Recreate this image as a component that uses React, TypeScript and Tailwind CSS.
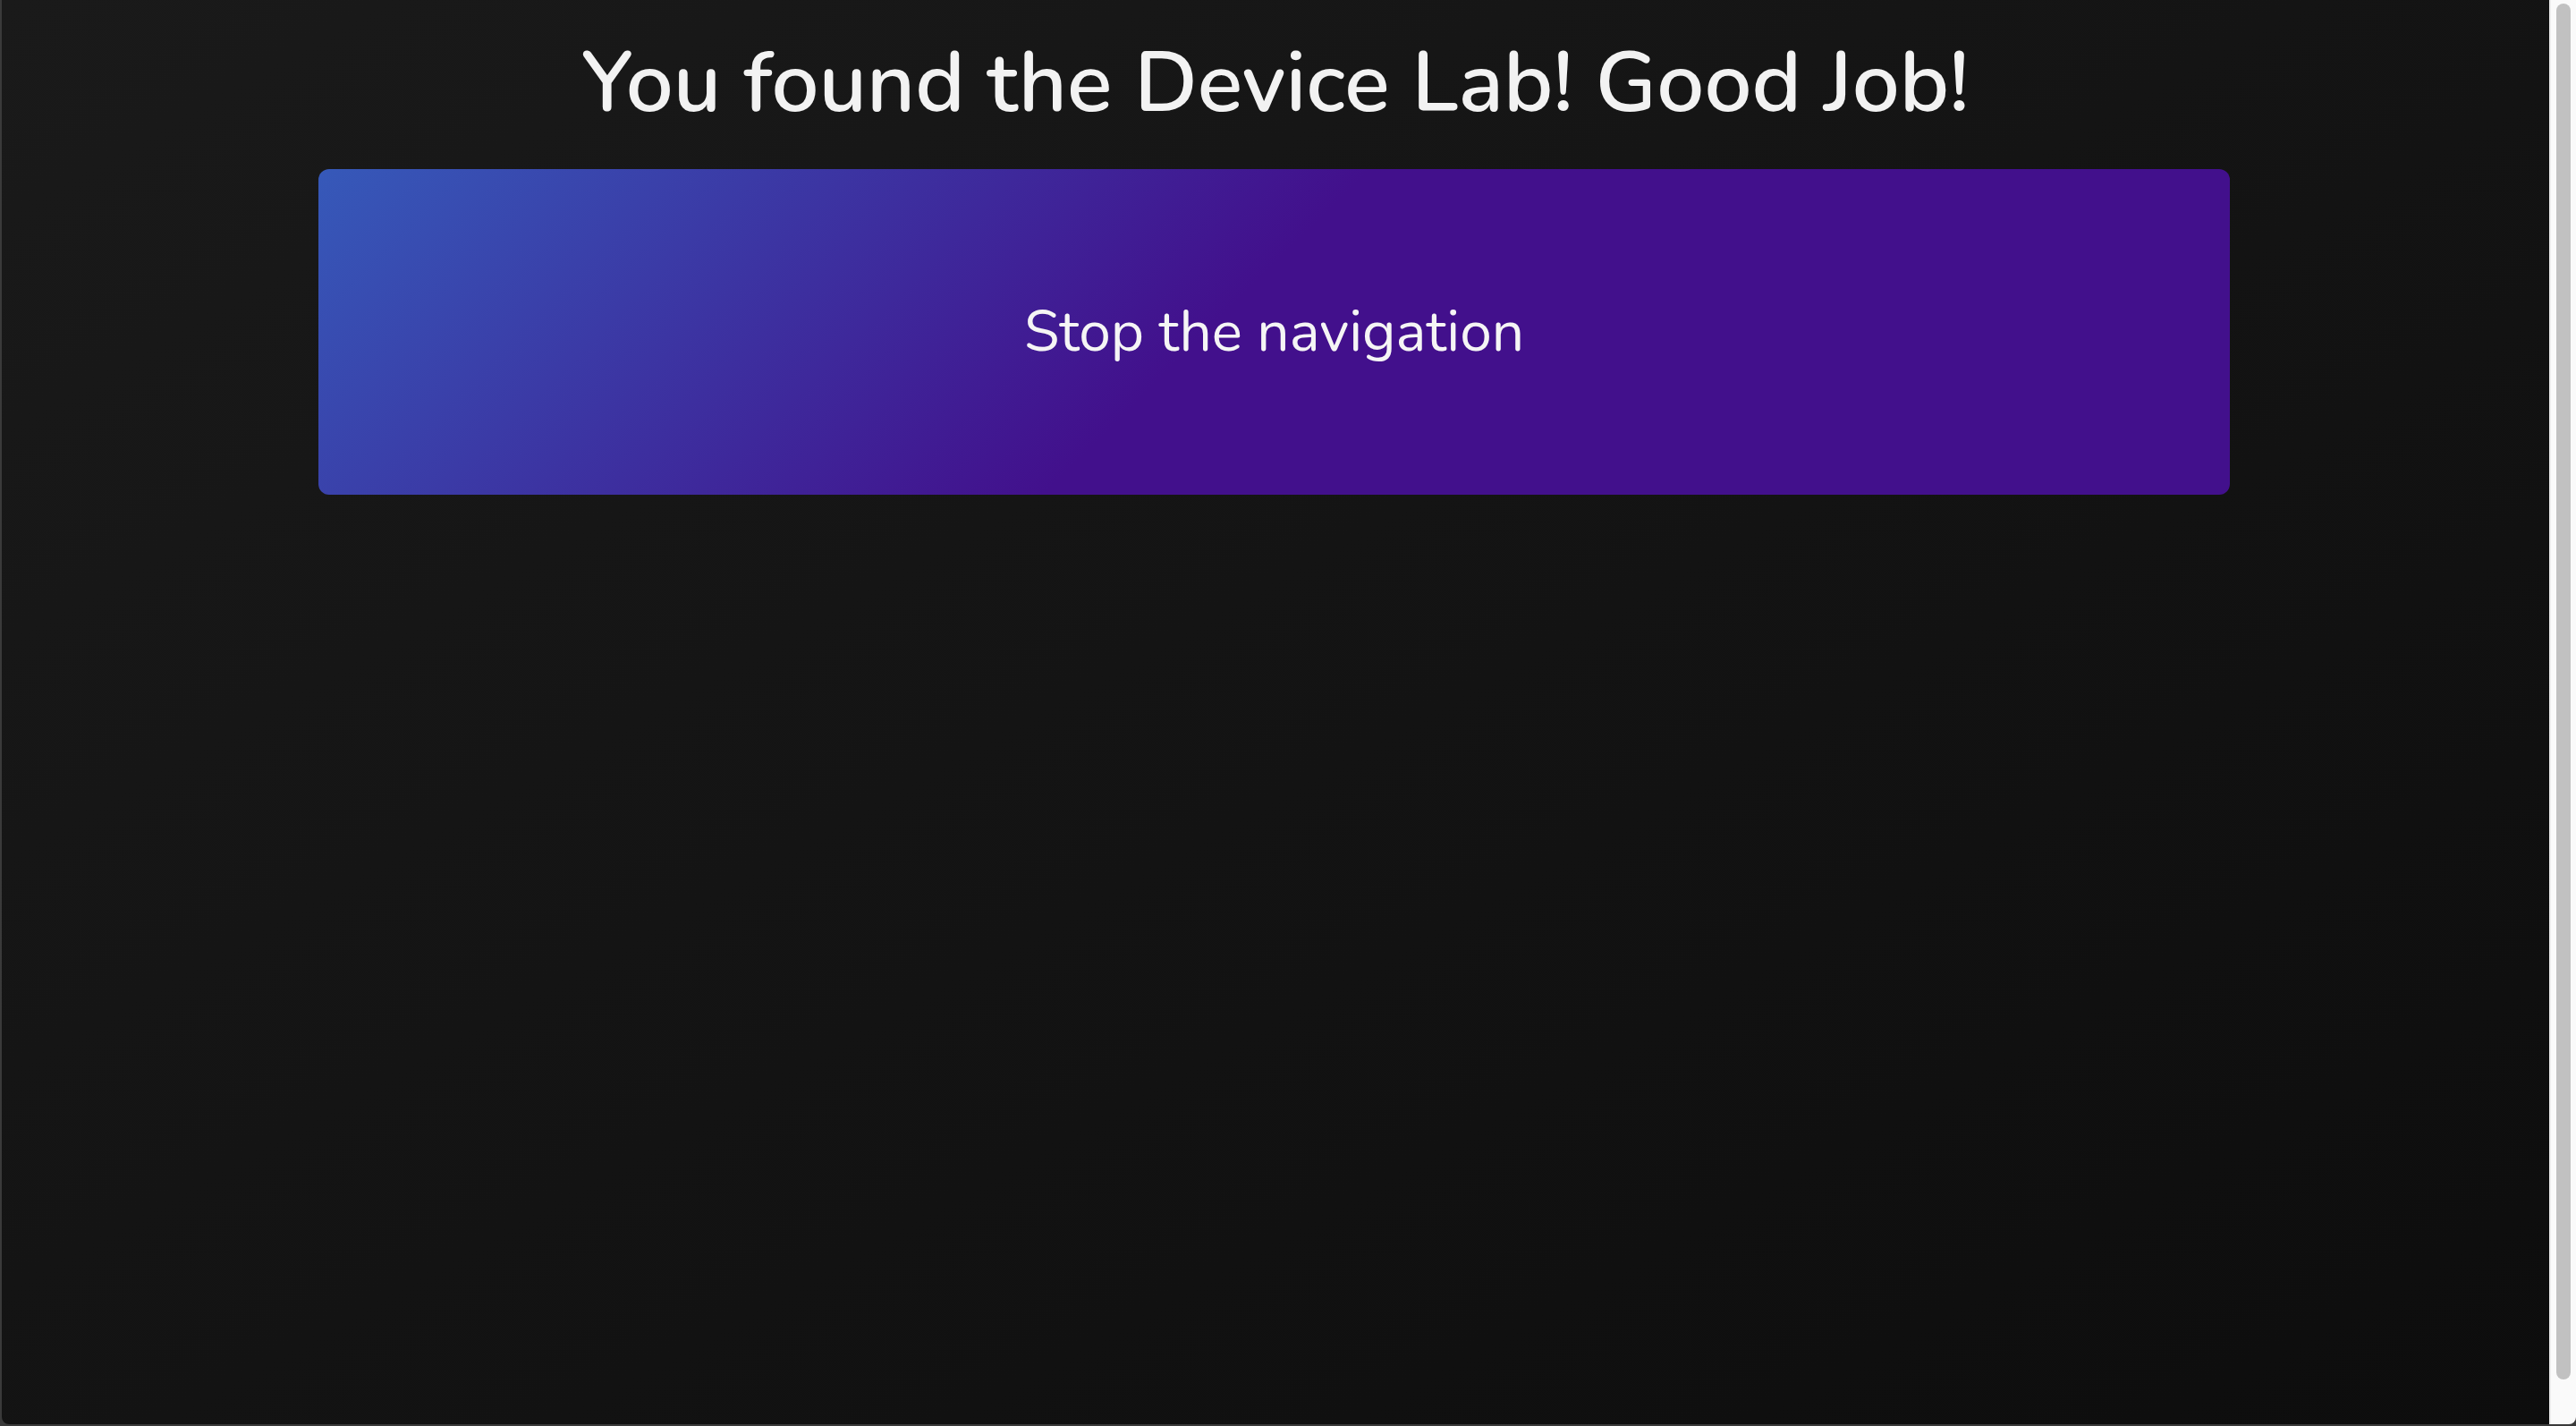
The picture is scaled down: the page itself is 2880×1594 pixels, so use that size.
import React from "react";

const font = { fontFamily: "Nunito, Lato, 'Noto Sans', sans-serif" };

function Scrollbar() {
  return (
    <div className="w-[30px] shrink-0 bg-[#fafafa] border-l-2 border-[#ececec] rounded-br-lg pt-[4px] pb-[50px] flex justify-center">
      <div className="w-[16px] h-full rounded-full bg-[#c1c1c1]" />
    </div>
  );
}

export default function App() {
  return (
    <div className="h-screen w-full flex bg-[#3a3a3a] pl-[2px] pb-[2px]" style={font}>
      <div className="flex-1 flex rounded-bl-lg overflow-hidden">
        <main className="flex-1 bg-linear-to-br from-[#1a1a1a] to-[#0d0d0d] pt-[38px]">
          <h1 className="text-center text-[94px] leading-[110px] font-semibold text-[#f2f2f2]">
            You found the Device Lab! Good Job!
          </h1>
          <div className="mt-[41px] px-[354px]">
            <button className="w-[2137px] h-[364px] rounded-xl bg-[linear-gradient(135deg,#3659b9_0%,#42108c_47%)] text-[#f5f5f5] text-[64px]">
              Stop the navigation
            </button>
          </div>
        </main>
        <Scrollbar />
      </div>
    </div>
  );
}
